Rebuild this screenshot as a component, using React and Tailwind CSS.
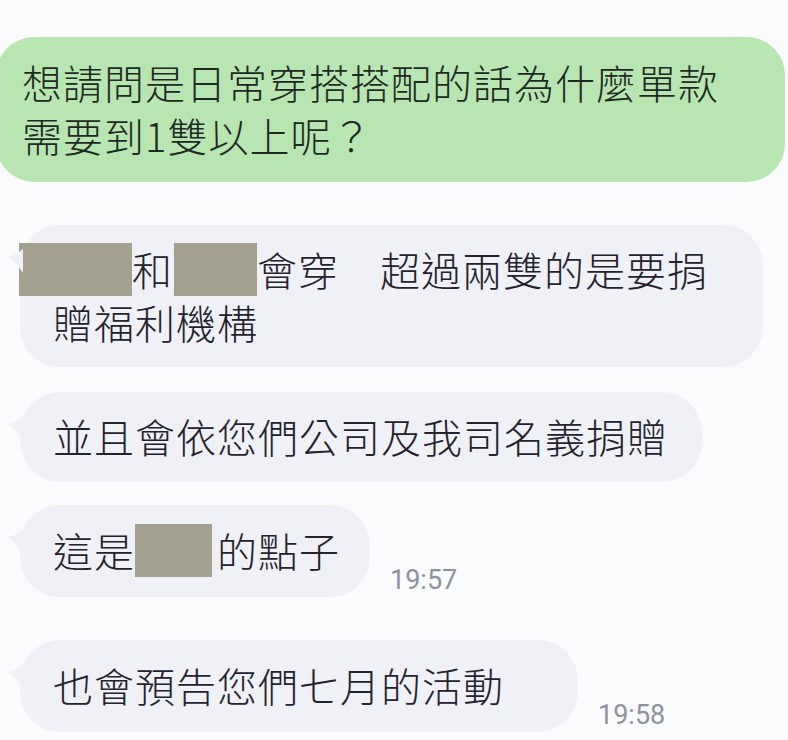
const cjk = { fontFamily: '"Noto Sans CJK TC", "Noto Sans CJK SC", sans-serif' };

function Tail() {
  return (
    <svg
      className="absolute left-[-13px] top-[24px]"
      width="16"
      height="24"
      viewBox="0 0 16 24"
    >
      <path d="M16 0 Q9 7 0 8 Q9 13 16 24 Z" fill="#eff1f6" />
    </svg>
  );
}

function Redact({ className }) {
  return <span className={"inline-block h-[53px] align-top bg-[#a4a08f] " + className} />;
}

function Bubble({ width, pad, children }) {
  return (
    <div
      className={"relative shrink-0 rounded-[40px] bg-[#eff1f6] pl-[33px] text-[40px] font-light leading-[53px] tracking-[1px] text-[#24222e] whitespace-nowrap " + width + " " + pad}
      style={cjk}
    >
      <Tail />
      {children}
    </div>
  );
}

function Time({ children }) {
  return (
    <span
      className="ml-[20px] mb-[2px] text-[27px] leading-[30px] text-[#8e929c]"
      style={{ fontFamily: 'Roboto, "Noto Sans", sans-serif' }}
    >
      {children}
    </span>
  );
}

export default function App() {
  return (
    <div className="w-[788px] h-[740px] overflow-hidden bg-[#fafbfd] pt-[37px]">
      <div
        className="ml-[-4px] w-[789px] rounded-[38px] bg-[#b8e6b1] pt-[19px] pb-[20px] pl-[26px] text-[40px] font-light leading-[53px] tracking-[1px] text-[#1d2a22] whitespace-nowrap"
        style={cjk}
      >
        想請問是日常穿搭搭配的話為什麼單款
        <br />
        需要到1雙以上呢？
      </div>

      <div className="mt-[43px] flex flex-col pl-[20px]">
        <div className="flex">
          <Bubble width="w-[743px]" pad="py-[18px]">
            <Redact className="w-[113px] ml-[-34px]" />
            和
            <Redact className="w-[83px] ml-[1px]" />
            會穿　超過兩雙的是要捐
            <br />
            贈福利機構
          </Bubble>
        </div>

        <div className="mt-[25px] flex">
          <Bubble width="w-[682px]" pad="pt-[18px] pb-[19px]">並且會依您們公司及我司名義捐贈</Bubble>
        </div>

        <div className="mt-[23px] flex items-end">
          <Bubble width="w-[350px]" pad="pt-[19px] pb-[20px]">
            這是
            <Redact className="w-[77px] mr-[5px]" />
            的點子
          </Bubble>
          <Time>19:57</Time>
        </div>

        <div className="mt-[43px] flex items-end">
          <Bubble width="w-[558px]" pad="pt-[19px] pb-[20px]">也會預告您們七月的活動</Bubble>
          <Time>19:58</Time>
        </div>
      </div>
    </div>
  );
}
